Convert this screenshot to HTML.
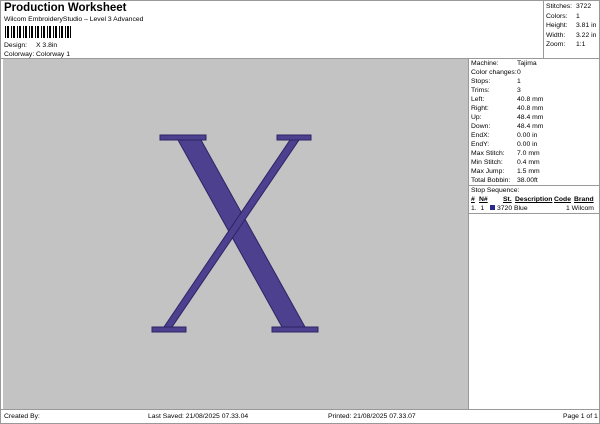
<!DOCTYPE html>
<html><head><style>
body{margin:0;width:600px;height:424px;background:#fff;font-family:"Liberation Sans",sans-serif;position:relative;overflow:hidden;color:#000}
.a{position:absolute;font-size:6.8px;line-height:9px;white-space:nowrap}
</style></head><body>
<div style="position:absolute;left:0;top:0;width:598px;height:422px;border:1px solid #999"></div>
<div class="a" style="left:4px;top:2px;font-size:11.5px;line-height:13px;font-weight:bold">Production Worksheet</div>
<div class="a" style="left:4px;top:15px">Wilcom EmbroideryStudio – Level 3 Advanced</div>
<svg style="position:absolute;left:5px;top:26px" width="66" height="12">
<g fill="#000">
<rect x="0" y="0" width="1" height="12"/><rect x="2" y="0" width="2" height="12"/><rect x="6" y="0" width="1" height="12"/><rect x="8" y="0" width="2" height="12"/><rect x="12" y="0" width="1" height="12"/><rect x="14" y="0" width="2" height="12"/><rect x="18" y="0" width="1" height="12"/><rect x="20" y="0" width="2" height="12"/><rect x="24" y="0" width="1" height="12"/><rect x="26" y="0" width="2" height="12"/><rect x="30" y="0" width="1" height="12"/><rect x="32" y="0" width="2" height="12"/><rect x="36" y="0" width="1" height="12"/><rect x="38" y="0" width="2" height="12"/><rect x="42" y="0" width="1" height="12"/><rect x="44" y="0" width="2" height="12"/><rect x="48" y="0" width="1" height="12"/><rect x="50" y="0" width="2" height="12"/><rect x="54" y="0" width="1" height="12"/><rect x="56" y="0" width="2" height="12"/><rect x="60" y="0" width="1" height="12"/><rect x="62" y="0" width="2" height="12"/><rect x="65" y="0" width="1" height="12"/></g></svg>
<div class="a" style="left:4px;top:41px">Design:</div><div class="a" style="left:36px;top:41px">X 3.8in</div>
<div class="a" style="left:4px;top:50px">Colorway:</div><div class="a" style="left:36px;top:50px">Colorway 1</div>
<div style="position:absolute;left:543px;top:0;width:1px;height:58px;background:#999"></div>
<div class="a" style="left:546px;top:2px;line-height:9.5px">Stitches:<br>Colors:<br>Height:<br>Width:<br>Zoom:</div>
<div class="a" style="left:576px;top:2px;line-height:9.5px">3722<br>1<br>3.81 in<br>3.22 in<br>1:1</div>
<div style="position:absolute;left:1px;top:58px;width:598px;height:1px;background:#999"></div>
<div style="position:absolute;left:3px;top:59px;width:465px;height:350px;background:#c3c3c3"></div>
<div style="position:absolute;left:468px;top:59px;width:1px;height:350px;background:#999"></div>
<svg style="position:absolute;left:0;top:0" width="600" height="424">
<g fill="#4d418f" stroke="#2c2465" stroke-width="1">
<polygon points="178,140 201,140 305,327 282,327"/>
<polygon points="290,140 299,140 172,327 164,327"/>
<rect x="160" y="135" width="46" height="5"/>
<rect x="277" y="135" width="34" height="5"/>
<rect x="152" y="327" width="34" height="5"/>
<rect x="272" y="327" width="46" height="5"/>
</g></svg>
<div class="a" style="left:471px;top:59px">Machine:<br>Color changes:<br>Stops:<br>Trims:<br>Left:<br>Right:<br>Up:<br>Down:<br>EndX:<br>EndY:<br>Max Stitch:<br>Min Stitch:<br>Max Jump:<br>Total Bobbin:</div>
<div class="a" style="left:517px;top:59px">Tajima<br>0<br>1<br>3<br>40.8 mm<br>40.8 mm<br>48.4 mm<br>48.4 mm<br>0.00 in<br>0.00 in<br>7.0 mm<br>0.4 mm<br>1.5 mm<br>38.00ft</div>
<div style="position:absolute;left:469px;top:185px;width:130px;height:1px;background:#999"></div>
<div class="a" style="left:471px;top:186px">Stop Sequence:</div>
<div class="a" style="left:471px;top:195px;font-weight:bold;text-decoration:underline">#</div>
<div class="a" style="left:479px;top:195px;font-weight:bold;text-decoration:underline">N#</div>
<div class="a" style="left:503px;top:195px;font-weight:bold;text-decoration:underline">St.</div>
<div class="a" style="left:515px;top:195px;font-weight:bold;text-decoration:underline">Description</div>
<div class="a" style="left:554px;top:195px;font-weight:bold;text-decoration:underline">Code</div>
<div class="a" style="left:574px;top:195px;font-weight:bold;text-decoration:underline">Brand</div>
<div class="a" style="left:471px;top:204px">1.&nbsp; 1</div>
<div style="position:absolute;left:490px;top:205px;width:5px;height:5px;background:#2a2a8c"></div>
<div class="a" style="left:497px;top:204px">3720 Blue</div>
<div class="a" style="left:566px;top:204px">1 Wilcom</div>
<div style="position:absolute;left:469px;top:213px;width:130px;height:1px;background:#999"></div>
<div style="position:absolute;left:1px;top:409px;width:598px;height:1px;background:#999"></div>
<div class="a" style="left:4px;top:412px">Created By:</div>
<div class="a" style="left:148px;top:412px">Last Saved: 21/08/2025 07.33.04</div>
<div class="a" style="left:328px;top:412px">Printed: 21/08/2025 07.33.07</div>
<div class="a" style="left:563px;top:412px">Page 1 of 1</div>
</body></html>
